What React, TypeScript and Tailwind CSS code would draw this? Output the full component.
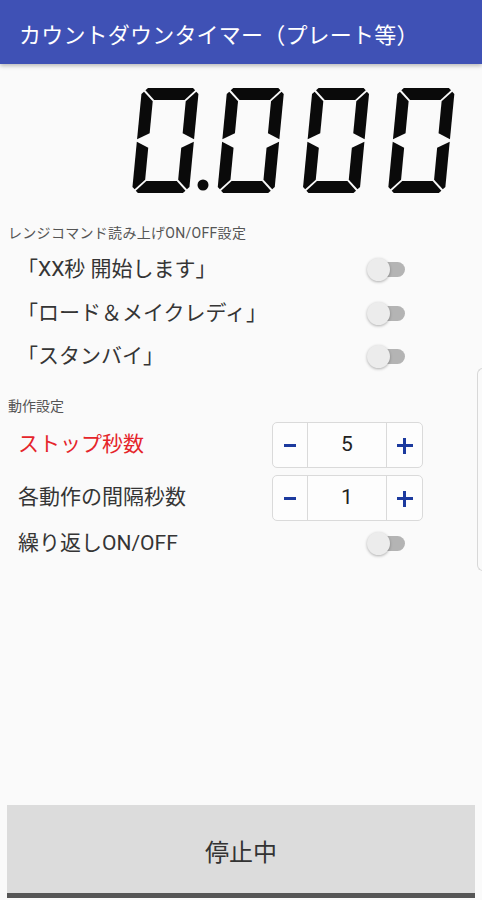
import React from "react";

const FONT = { fontFamily: 'Roboto, "Noto Sans CJK JP", sans-serif' };

// 7-segment "0" drawn upright, then slanted with skewX
const W = 57;
const H = 105;
const T = 12;
const G = 1.3;
const C = 6;
const M = H / 2;

const pts = (list: number[][]) => list.map((p) => p.join(",")).join(" ");

const SEGMENTS = [
  // a
  pts([[C, 0], [W - C, 0], [W - (C + G) / 2, (C - G) / 2], [W - T - G, T], [T + G, T], [(C + G) / 2, (C - G) / 2]]),
  // b
  pts([[W, C], [W, M - G], [W - T, M - G - T / 2], [W - T, T + G], [W - (C - G) / 2, (C + G) / 2]]),
  // c
  pts([[W, M + G], [W, H - C], [W - (C - G) / 2, H - (C + G) / 2], [W - T, H - T - G], [W - T, M + G + T / 2]]),
  // d
  pts([[C, H], [(C + G) / 2, H - (C - G) / 2], [T + G, H - T], [W - T - G, H - T], [W - (C + G) / 2, H - (C - G) / 2], [W - C, H]]),
  // e
  pts([[0, M + G], [T, M + G + T / 2], [T, H - T - G], [(C - G) / 2, H - (C + G) / 2], [0, H - C]]),
  // f
  pts([[0, C], [(C - G) / 2, (C + G) / 2], [T, T + G], [T, M - G - T / 2], [0, M - G]]),
];

function Zero({ x }: { x: number }) {
  return (
    <g transform={`translate(${x + 10},0) skewX(-5.5)`}>
      {SEGMENTS.map((p, i) => (
        <polygon key={i} points={p} fill="#0a0a0a" />
      ))}
    </g>
  );
}

function Toggle() {
  return (
    <div className="relative h-[23px] w-[38px]">
      <div className="absolute right-0 top-[4px] h-[15px] w-[30px] rounded-full bg-[#b4b4b4]" />
      <div className="absolute left-0 top-0 h-[23px] w-[23px] rounded-full bg-[#ececec] shadow-[0_1px_3px_rgba(0,0,0,0.3)]" />
    </div>
  );
}

function Stepper({ value }: { value: number }) {
  return (
    <div className="flex h-[46px] w-[151px] rounded-[5px] border border-[#dadada] bg-[#fdfdfd]">
      <div className="flex w-[35px] items-center justify-center border-r border-[#dadada]">
        <div className="mt-[2px] h-[3.5px] w-[12px] bg-[#1c3a9e]" />
      </div>
      <div className="flex flex-1 items-center justify-center border-r border-[#dadada] text-[21px] text-[#222]">
        {value}
      </div>
      <div className="relative flex w-[35px] items-center justify-center pt-[2px]">
        <div className="h-[3.5px] w-[16px] bg-[#1c3a9e]" />
        <div className="absolute h-[16px] w-[3.5px] bg-[#1c3a9e]" />
      </div>
    </div>
  );
}

function SwitchRow({ label }: { label: string }) {
  return (
    <div className="flex h-[43.5px] items-center justify-between pl-[17px] pr-[77px]">
      <span className="text-[21px] text-[#353535]">{label}</span>
      <Toggle />
    </div>
  );
}

export default function App() {
  return (
    <div className="relative flex min-h-[900px] flex-col bg-[#fafafa]" style={FONT}>
      <header className="flex h-16 shrink-0 items-center bg-[#3f51b5] pl-[19px] pt-[6px] shadow-[0_2px_4px_rgba(0,0,0,0.25)]">
        <h1 className="text-[22px] tracking-[0.2px] text-white">カウントダウンタイマー（プレート等）</h1>
      </header>

      <div className="mt-6 pl-[128px]">
        <svg width="334" height="106" viewBox="0 0 334 106" className="block">
          {[0, 1, 2, 3].map((i) => (
            <Zero key={i} x={4 + i * 85.3} />
          ))}
          <circle cx="75" cy="97" r="5.5" fill="#0a0a0a" />
        </svg>
      </div>

      <div className="mt-[30px] pl-[8px] text-[14px] leading-[18px] tracking-[0.3px] text-[#555]">
        レンジコマンド読み上げON/OFF設定
      </div>
      <div className="mt-[6px]">
        <SwitchRow label="「XX秒 開始します」" />
        <SwitchRow label="「ロード＆メイクレディ」" />
        <SwitchRow label="「スタンバイ」" />
      </div>

      <div className="mt-[18px] pl-[8px] text-[14px] leading-[18px] text-[#555]">動作設定</div>

      <div className="mt-[7px] flex flex-col gap-[7px] pl-[18px] pr-[59px]">
        <div className="flex items-center justify-between">
          <span className="text-[21px] text-[#e5252a]">ストップ秒数</span>
          <Stepper value={5} />
        </div>
        <div className="flex items-center justify-between">
          <span className="text-[21px] text-[#353535]">各動作の間隔秒数</span>
          <Stepper value={1} />
        </div>
      </div>
      <div className="flex h-[46px] items-center justify-between pl-[18px] pr-[77px]">
        <span className="text-[21px] text-[#353535]">繰り返しON/OFF</span>
        <Toggle />
      </div>

      <div className="flex-1" />

      <div className="mx-[7px] mb-[2px] flex h-[93px] items-center justify-center border-b-[5px] border-[#555] bg-[#dcdcdc] pt-[8px]">
        <span className="text-[24px] text-[#333]">停止中</span>
      </div>

      <div className="absolute left-[477px] top-[368px] h-[203px] w-[8px] rounded-l-[6px] border-y border-l border-[#d8d8d8]" />
    </div>
  );
}
